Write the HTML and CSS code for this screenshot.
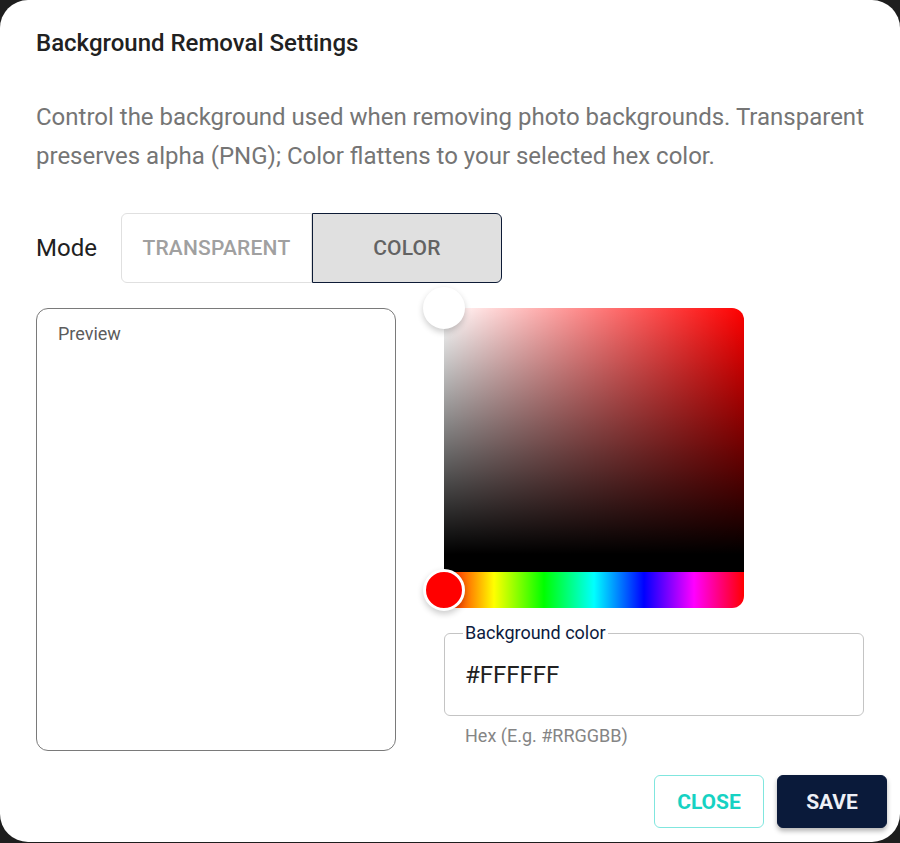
FILE: index.html
```html
<!DOCTYPE html>
<html lang="en">
<head>
<meta charset="utf-8">
<title>Background Removal Settings</title>
<link rel="stylesheet" href="styles.css">
</head>
<body>
<div class="dialog" role="dialog" aria-labelledby="dlg-title">
  <h2 class="dialog-title" id="dlg-title">Background Removal Settings</h2>
  <div class="dialog-content">
    <p class="description">Control the background used when removing photo backgrounds. Transparent preserves alpha (PNG); Color flattens to your selected hex color.</p>
    <div class="mode-row">
      <span class="mode-label">Mode</span>
      <div class="toggle-group">
        <button class="toggle">Transparent</button>
        <button class="toggle selected">Color</button>
      </div>
    </div>
    <div class="editor">
      <div class="preview">
        <span class="preview-label">Preview</span>
      </div>
      <div class="color-column">
        <div class="picker">
          <div class="saturation">
            <div class="pointer sat-pointer"></div>
          </div>
          <div class="hue">
            <div class="pointer hue-pointer"></div>
          </div>
        </div>
        <fieldset class="text-field">
          <legend class="field-label">Background color</legend>
          <input class="field-input" type="text" value="#FFFFFF">
        </fieldset>
        <p class="helper">Hex (E.g. #RRGGBB)</p>
      </div>
    </div>
  </div>
  <div class="dialog-actions">
    <button class="btn btn-outline">Close</button>
    <button class="btn btn-primary">Save</button>
  </div>
</div>
</body>
</html>
```

FILE: styles.css
```css
* { box-sizing: border-box; }

html, body {
  margin: 0;
  padding: 0;
}

body {
  background: #1e1e1e;
  font-family: Roboto, "Liberation Sans", sans-serif;
  width: 900px;
  height: 843px;
  overflow: hidden;
}

.dialog {
  width: 900px;
  height: 842px;
  background: #ffffff;
  border-radius: 28px;
  display: flex;
  flex-direction: column;
}

.dialog-title {
  margin: 0;
  padding: 24px 36px 24px;
  font-size: 24px;
  font-weight: 500;
  line-height: 38.4px;
  color: #212121;
}

.dialog-content {
  padding: 12px 36px 0;
}

.description {
  margin: 0;
  font-size: 24px;
  line-height: 38.4px;
  color: #757575;
}

.mode-row {
  margin-top: 38px;
  display: flex;
  align-items: center;
  gap: 24px;
}

.mode-label {
  font-size: 24px;
  color: #212121;
}

.toggle-group {
  display: flex;
}

.toggle {
  width: 191px;
  padding: 16px 0;
  font-family: inherit;
  font-size: 21px;
  font-weight: 500;
  line-height: 36px;
  text-transform: uppercase;
  letter-spacing: 0.2px;
  background: #ffffff;
  color: #a0a0a0;
  border: 1px solid #e0e0e0;
  border-radius: 6px 0 0 6px;
  cursor: pointer;
}

.toggle.selected {
  width: 190px;
  background: #e0e0e0;
  color: #636363;
  border-color: #0d1b36;
  border-radius: 0 6px 6px 0;
}

.editor {
  margin-top: 25px;
  display: grid;
  grid-template-columns: 360px 1fr;
  gap: 48px;
}

.preview {
  border: 1px solid #7a7a7a;
  border-radius: 12px;
  padding: 11px 21px;
}

.preview-label {
  font-size: 18px;
  line-height: 27px;
  color: #5c5c5c;
}

.color-column {
  display: flex;
  flex-direction: column;
}

.picker {
  position: relative;
  width: 300px;
  height: 300px;
  display: flex;
  flex-direction: column;
}

.saturation {
  position: relative;
  flex-grow: 1;
  border-radius: 12px 12px 0 0;
  border-bottom: 18px solid #000;
  background-color: #ff0000;
  background-image:
    linear-gradient(to top, #000, rgba(0, 0, 0, 0)),
    linear-gradient(to right, #fff, rgba(255, 255, 255, 0));
}

.hue {
  position: relative;
  flex: 0 0 36px;
  border-radius: 0 0 12px 12px;
  background: linear-gradient(to right,
    #f00 0%, #ff0 16.67%, #0f0 33.33%, #0ff 50%, #00f 66.67%, #f0f 83.33%, #f00 100%);
}

.pointer {
  position: absolute;
  width: 42px;
  height: 42px;
  border-radius: 50%;
  border: 3px solid #fff;
  box-shadow: 0 3px 6px rgba(0, 0, 0, 0.2);
  transform: translate(-50%, -50%);
}

.sat-pointer {
  left: 0;
  top: 0;
  background: #ffffff;
}

.hue-pointer {
  left: 0;
  top: 50%;
  background: #ff0000;
}

.text-field {
  margin: 14px 0 0;
  padding: 0 20px 25px;
  border: 1px solid #c4c4c4;
  border-radius: 6px;
  min-width: 0;
}

.field-label {
  margin-left: -2px;
  padding: 0 2px;
  font-size: 18px;
  line-height: 22px;
  color: #0d1b3e;
}

.field-input {
  display: block;
  width: 100%;
  margin-top: 16px;
  padding: 0;
  border: none;
  outline: none;
  font-family: inherit;
  font-size: 24px;
  line-height: 30px;
  height: 30px;
  color: #212121;
  background: transparent;
}

.helper {
  margin: 5px 0 0 21px;
  font-size: 18px;
  line-height: 30px;
  color: #858585;
}

.dialog-actions {
  margin-top: auto;
  padding: 0 13px 14px;
  display: flex;
  justify-content: flex-end;
  gap: 13px;
}

.btn {
  min-width: 110px;
  padding: 9px 22px 7px;
  font-family: inherit;
  font-size: 21px;
  font-weight: 700;
  line-height: 35px;
  text-transform: uppercase;
  border-radius: 6px;
  cursor: pointer;
}

.btn-outline {
  background: #ffffff;
  color: #16d2c3;
  border: 1px solid #80e6de;
}

.btn-primary {
  background: #0a1a3a;
  color: #eef0f6;
  border: 1px solid #0a1a3a;
  box-shadow: 0 3px 5px rgba(0, 0, 0, 0.3);
}
```
